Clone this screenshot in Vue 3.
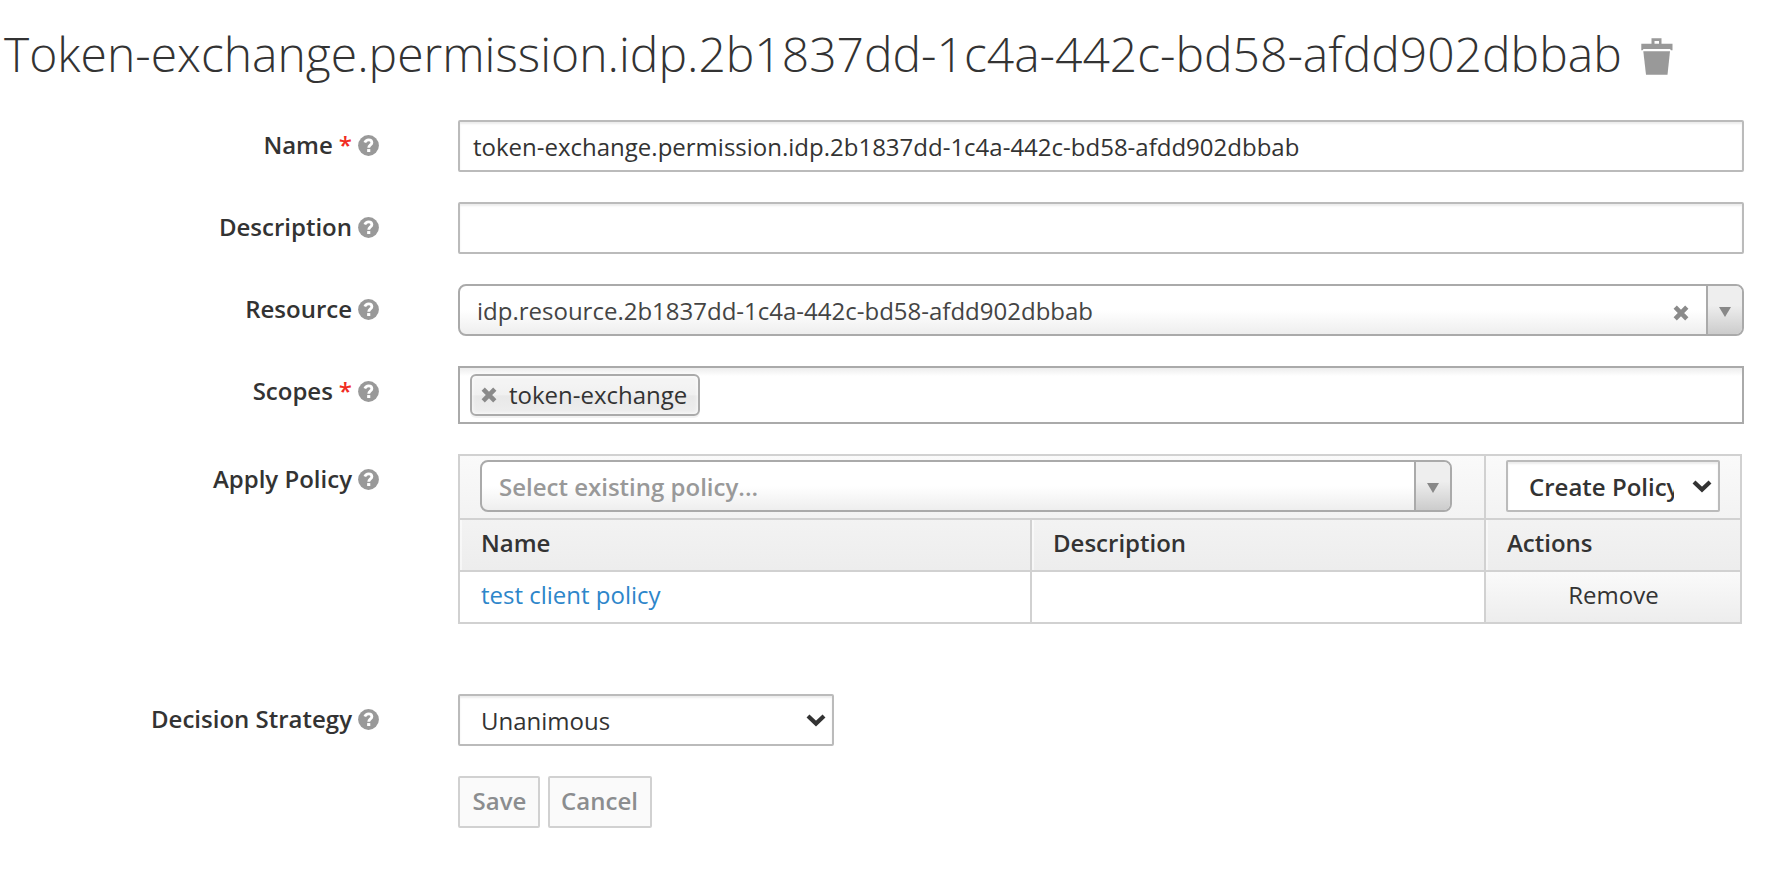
<script setup>
const title = 'Token-exchange.permission.idp.2b1837dd-1c4a-442c-bd58-afdd902dbbab'
const name = 'token-exchange.permission.idp.2b1837dd-1c4a-442c-bd58-afdd902dbbab'
const resource = 'idp.resource.2b1837dd-1c4a-442c-bd58-afdd902dbbab'
const labels = {
  name: { text: 'Name', required: true },
  description: { text: 'Description' },
  resource: { text: 'Resource' },
  scopes: { text: 'Scopes', required: true },
  policy: { text: 'Apply Policy' },
  strategy: { text: 'Decision Strategy' },
}
</script>

<template>
  <main class="page">
    <svg width="0" height="0" class="defs">
      <symbol id="cross" viewBox="0 0 16 16">
        <path d="M2.2 2.2 13.8 13.8M13.8 2.2 2.2 13.8" fill="none" stroke="#8a8a8a" stroke-width="4.6" />
      </symbol>
      <symbol id="chevron" viewBox="0 0 20 14">
        <path d="M2 3 10 10.6 18 3" fill="none" stroke="#333" stroke-width="4.2" />
      </symbol>
      <symbol id="triangle" viewBox="0 0 12 10">
        <path d="M0 0H12L6 10Z" fill="#888" />
      </symbol>
    </svg>

    <h1>
      <span class="title-text">{{ title }}</span>
      <svg class="trash" width="32" height="38" viewBox="0 0 32 38" fill="#999">
        <path fill-rule="evenodd" d="M10.5 0.3H20.5V5.8H31.5V12.2H30L29 11H2.5L1.5 12.2H0.3V5.8H10.5ZM13.5 3V5.8H18V3Z" />
        <path d="M2.3 13.2H29L26.5 36.7H5Z" />
      </svg>
    </h1>

    <form class="form" @submit.prevent>
      <div v-for="(label, key) in labels" :key="key" class="row" :class="key">
        <label class="label">
          {{ label.text }}
          <span v-if="label.required" class="star">*</span>
          <svg class="help" width="21" height="21" viewBox="0 0 20 20">
            <circle cx="10" cy="10" r="9.9" fill="#999" />
            <path d="M6.5 7.1C7.2 5.4 8.4 4.6 10.1 4.6C11.9 4.6 13.2 5.7 13.2 7.3C13.2 9.4 10.2 9.4 10.2 12.1" fill="none" stroke="#fff" stroke-width="2.7" />
            <rect x="8.7" y="13.4" width="3" height="2.8" fill="#fff" />
          </svg>
        </label>

        <div v-if="key === 'name'" class="input">{{ name }}</div>
        <div v-else-if="key === 'description'" class="input"></div>
        <div v-else-if="key === 'resource'" class="combo">
          <span class="combo-text">{{ resource }}</span>
          <svg class="clear" width="16" height="16"><use href="#cross" /></svg>
          <span class="arrow"><svg width="12" height="10"><use href="#triangle" /></svg></span>
        </div>
        <div v-else-if="key === 'scopes'" class="multi">
          <span class="chip">
            <svg width="16" height="16"><use href="#cross" /></svg>
            <span>token-exchange</span>
          </span>
        </div>
        <div v-else-if="key === 'policy'" class="table">
          <div class="cell tools span2">
            <div class="combo small">
              <span class="combo-text placeholder">Select existing policy...</span>
              <span class="arrow"><svg width="12" height="10"><use href="#triangle" /></svg></span>
            </div>
          </div>
          <div class="cell tools">
            <div class="select create">
              <span class="select-text">Create Policy...</span>
              <svg class="chev" width="20" height="14"><use href="#chevron" /></svg>
            </div>
          </div>
          <div class="cell head">Name</div>
          <div class="cell head">Description</div>
          <div class="cell head">Actions</div>
          <div class="cell"><a class="link">test client policy</a></div>
          <div class="cell"></div>
          <div class="cell remove">Remove</div>
        </div>
        <div v-else class="select unanimous">
          <span class="select-text">Unanimous</span>
          <svg class="chev" width="20" height="14"><use href="#chevron" /></svg>
        </div>
      </div>

      <div class="actions">
        <button type="button" disabled>Save</button>
        <button type="button" disabled>Cancel</button>
      </div>
    </form>
  </main>
</template>

<style>
body {
  background: #fff;
}
</style>

<style scoped>
.page {
  box-sizing: border-box;
  width: 1780px;
  height: 894px;
  overflow: hidden;
  font: 24px/40px 'Open Sans', 'Noto Sans', sans-serif;
  color: #333;
}
.page * {
  box-sizing: border-box;
}
.defs {
  display: block;
}
h1 {
  display: flex;
  align-items: flex-start;
  margin: 0;
  padding: 27px 0 0 4px;
  height: 120px;
  font-size: 48px;
  font-weight: 300;
  line-height: 53px;
}
.title-text {
  width: 1617px;
  white-space: nowrap;
}
.trash {
  margin: 11px 0 0 20px;
}
.row {
  display: flex;
  align-items: flex-start;
  margin-bottom: 30px;
}
.label {
  display: flex;
  align-items: center;
  justify-content: flex-end;
  gap: 6px;
  width: 379px;
  margin-right: 79px;
  padding-top: 5px;
  font-weight: 600;
}
.star {
  color: #f12c22;
}
.help {
  margin-top: 1px;
}
.input {
  width: 1286px;
  height: 52px;
  padding: 5px 13px 0;
  border: 2px solid #bbb;
  border-radius: 2px;
  box-shadow: inset 0 2px 2px rgba(3, 3, 3, 0.075);
}
.combo {
  display: flex;
  align-items: center;
  width: 1286px;
  height: 52px;
  border: 2px solid #aaa;
  border-radius: 8px;
  background: linear-gradient(to top, #eee 0%, #fff 50%);
  overflow: hidden;
}
.combo-text {
  flex: 1;
  padding: 1px 0 0 17px;
  color: #444;
}
.combo-text.placeholder {
  color: #999;
  font-weight: 600;
}
.clear {
  margin: 5px 17px 0 0;
}
.arrow {
  display: flex;
  align-items: center;
  justify-content: center;
  width: 36px;
  height: 100%;
  padding-top: 4px;
  border-left: 2px solid #aaa;
  background: linear-gradient(to top, #ccc 0%, #eee 60%);
}
.multi {
  width: 1286px;
  height: 58px;
  padding: 6px 10px;
  border: 2px solid #aaa;
  background: linear-gradient(#eee 1%, #fff 15%);
}
.chip {
  display: flex;
  align-items: center;
  gap: 12px;
  width: 230px;
  height: 42px;
  padding-left: 9px;
  border: 2px solid #aaa;
  border-radius: 6px;
  background: linear-gradient(#f4f4f4 20%, #f0f0f0 50%, #e8e8e8 52%, #eee 100%);
  box-shadow: inset 0 0 4px #fff, 0 2px 0 rgba(0, 0, 0, 0.05);
}
.table {
  display: grid;
  grid-template-columns: 572px 454px 256px;
  grid-template-rows: 64px 52px 52px;
  width: 1284px;
  height: 170px;
  margin-bottom: 40px;
  border-left: 2px solid #d1d1d1;
  border-bottom: 2px solid #d1d1d1;
  background: linear-gradient(#fafafa, #ededed 116px, #fff 116px);
}
.cell {
  padding: 3px 20px 0 21px;
  border-top: 2px solid #d1d1d1;
  border-right: 2px solid #d1d1d1;
}
.tools {
  padding: 4px 20px 0;
}
.span2 {
  grid-column: span 2;
}
.head {
  font-weight: 600;
  box-shadow: inset 2px 0 0 rgba(255, 255, 255, 0.5);
}
.small {
  width: 972px;
}
.remove {
  text-align: center;
  background: linear-gradient(#fafafa, #ededed);
}
.link {
  color: #2d86ca;
}
.select {
  display: flex;
  align-items: center;
  height: 52px;
  border: 2px solid #bbb;
  border-radius: 2px;
  background: #fff;
  box-shadow: inset 0 2px 2px rgba(3, 3, 3, 0.075);
}
.select-text {
  flex: 1;
  margin-left: 21px;
  padding-top: 1px;
  overflow: hidden;
  white-space: nowrap;
}
.chev {
  flex: none;
  margin: 0 6px 0 18px;
}
.create {
  width: 214px;
  font-weight: 600;
}
.unanimous {
  width: 376px;
}
.actions {
  display: flex;
  gap: 8px;
  margin-left: 458px;
}
button {
  height: 52px;
  padding: 0 0 2px;
  border: 2px solid #d1d1d1;
  border-radius: 2px;
  background: #fafafa;
  color: #8b8d8f;
  font: 600 24px/40px 'Open Sans', 'Noto Sans', sans-serif;
}
button:first-child {
  width: 82px;
  padding-left: 1px;
}
button:last-child {
  width: 104px;
  padding-right: 1px;
}
</style>
